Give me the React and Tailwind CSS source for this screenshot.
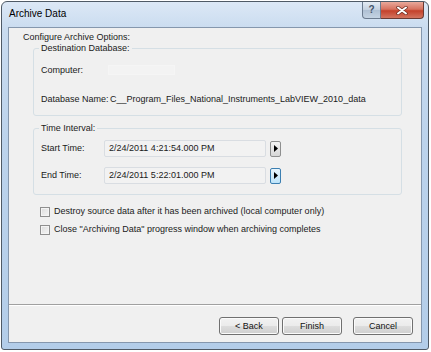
import React from "react";

const FONT = "font-['Liberation_Sans',Arial,sans-serif]";

const ArrowButton = ({ active }) => (
    <button
        className={
            active
                ? "ml-[4px] flex h-[16px] w-[11px] items-center justify-center rounded-[2px] border border-[#3c7fb1] bg-[linear-gradient(#eaf6fd,#bde4fa)]"
                : "ml-[4px] flex h-[16px] w-[11px] items-center justify-center rounded-[2px] border border-[#8e8f8f] bg-[linear-gradient(#f4f4f4,#d6d6d6)]"
        }
    >
        <svg width="4" height="7" viewBox="0 0 4 7">
            <path d="M0 0L4 3.5L0 7Z" fill="#000" />
        </svg>
    </button>
);

const TimeRow = ({ label, value, active, className }) => (
    <div className={`flex h-[17px] items-center ${className}`}>
        <span className="ml-[2px] w-[63px] shrink-0 whitespace-nowrap">{label}</span>
        <div className="flex h-[17px] w-[162px] items-center rounded-[2px] border border-[#d9dde2] bg-[#f2f2f2] pl-[4px]">
            {value}
        </div>
        <ArrowButton active={active} />
    </div>
);

const Check = ({ label, className }) => (
    <label className={`flex h-[13px] items-center ${className}`}>
        <span className="ml-[31px] h-[10px] w-[10px] border border-[#8f8f8f] bg-[linear-gradient(135deg,#dcdcdc,#f6f6f6)] shadow-[inset_0_0_0_1px_#f4f4f4]" />
        <span className="ml-[4px] whitespace-nowrap">{label}</span>
    </label>
);

const WinButton = ({ children, className }) => (
    <button
        className={`h-[18px] w-[60px] rounded-[3px] border border-[#707070] bg-[linear-gradient(#f2f2f2_0%,#ebebeb_50%,#dddddd_50%,#cfcfcf_100%)] text-[9px] text-[#111] shadow-[inset_0_0_0_1px_#fbfbfb] ${className}`}
    >
        {children}
    </button>
);

export default function App() {
    return (
        <div className={`h-[352px] w-[431px] bg-white ${FONT}`}>
            {/* window frame */}
            <div className="ml-[1px] mt-[1px] flex h-[349px] w-[428px] flex-col rounded-t-[6px] rounded-b-[3px] border border-[#4f5a66] bg-[linear-gradient(180deg,#dce8f6_0%,#c9dbef_8%,#bcd3ec_40%,#b3cde9_100%)] px-[6px] pb-[6px]">
                {/* title bar */}
                <div className="-mr-[2px] flex h-[25px] items-start justify-between">
                    <span className="mt-[6px] ml-[1px] text-[10px] leading-[12px] text-black">Archive Data</span>
                    <div className="flex">
                        <div className="flex h-[17px] w-[19px] items-center justify-center rounded-bl-[4px] border border-t-0 border-[#6b7b8f] bg-[linear-gradient(#e3ebf4,#c3d0df_50%,#aebfd3_50%,#c4d3e3)] text-[10px] font-bold leading-none text-[#44546a]">
                            ?
                        </div>
                        <div className="flex h-[17px] w-[43px] items-center justify-center rounded-br-[4px] border border-l-0 border-t-0 border-[#6b3a33] bg-[linear-gradient(#e9a99b,#d7725f_45%,#c4412b_55%,#d3745f)]">
                            <svg width="12" height="9" viewBox="0 0 12 9">
                                <path d="M2 1.5L10 7.5M10 1.5L2 7.5" stroke="#6a2a20" strokeWidth="3.4" strokeLinecap="round" />
                                <path d="M2 1.5L10 7.5M10 1.5L2 7.5" stroke="#ffffff" strokeWidth="2" strokeLinecap="round" />
                            </svg>
                        </div>
                    </div>
                </div>

                {/* client area */}
                <div className="flex h-[316px] flex-col border border-[#8597ad] bg-[#f0f0f0] text-[9px] leading-[11px] text-[#1a1a1a]">
                    <div className="ml-[14px] mt-[4px]">Configure Archive Options:</div>

                    <fieldset className="ml-[24px] w-[369px] rounded-[3px] border border-[#d5dfe5] pl-[5px] pb-[8px]">
                        <legend className="px-[2px]">Destination Database:</legend>
                        <div className="mt-[8px] flex h-[16px] items-center">
                            <span className="ml-[2px] w-[67px] shrink-0 whitespace-nowrap">Computer:</span>
                            <div className="h-[10px] w-[67px] border border-[#f5f5f5] bg-[#f3f3f3]" />
                        </div>
                        <div className="mt-[13px] flex h-[16px] items-center">
                            <span className="ml-[2px] w-[69px] shrink-0 whitespace-nowrap">Database Name:</span>
                            <span className="whitespace-nowrap">C__Program_Files_National_Instruments_LabVIEW_2010_data</span>
                        </div>
                    </fieldset>

                    <fieldset className="ml-[24px] mt-[7px] w-[369px] rounded-[3px] border border-[#d5dfe5] pl-[5px] pb-[10px]">
                        <legend className="px-[2px]">Time Interval:</legend>
                        <TimeRow className="mt-[6px]" label="Start Time:" value="2/24/2011 4:21:54.000 PM" />
                        <TimeRow className="mt-[10px]" label="End Time:" value="2/24/2011 5:22:01.000 PM" active />
                    </fieldset>

                    <Check className="mt-[10px]" label="Destroy source data after it has been archived (local computer only)" />
                    <Check className="mt-[5px]" label={'Close "Archiving Data" progress window when archiving completes'} />

                    {/* footer */}
                    <div className="mt-auto flex justify-end border-t border-[#a0a0a0] pr-[8px] pt-[12px] pb-[7px] shadow-[inset_0_1px_0_#ffffff]">
                        <WinButton>&lt; Back</WinButton>
                        <WinButton className="ml-[3px] w-[59px]">Finish</WinButton>
                        <WinButton className="ml-[11px] w-[59px]">Cancel</WinButton>
                    </div>
                </div>
            </div>
        </div>
    );
}
